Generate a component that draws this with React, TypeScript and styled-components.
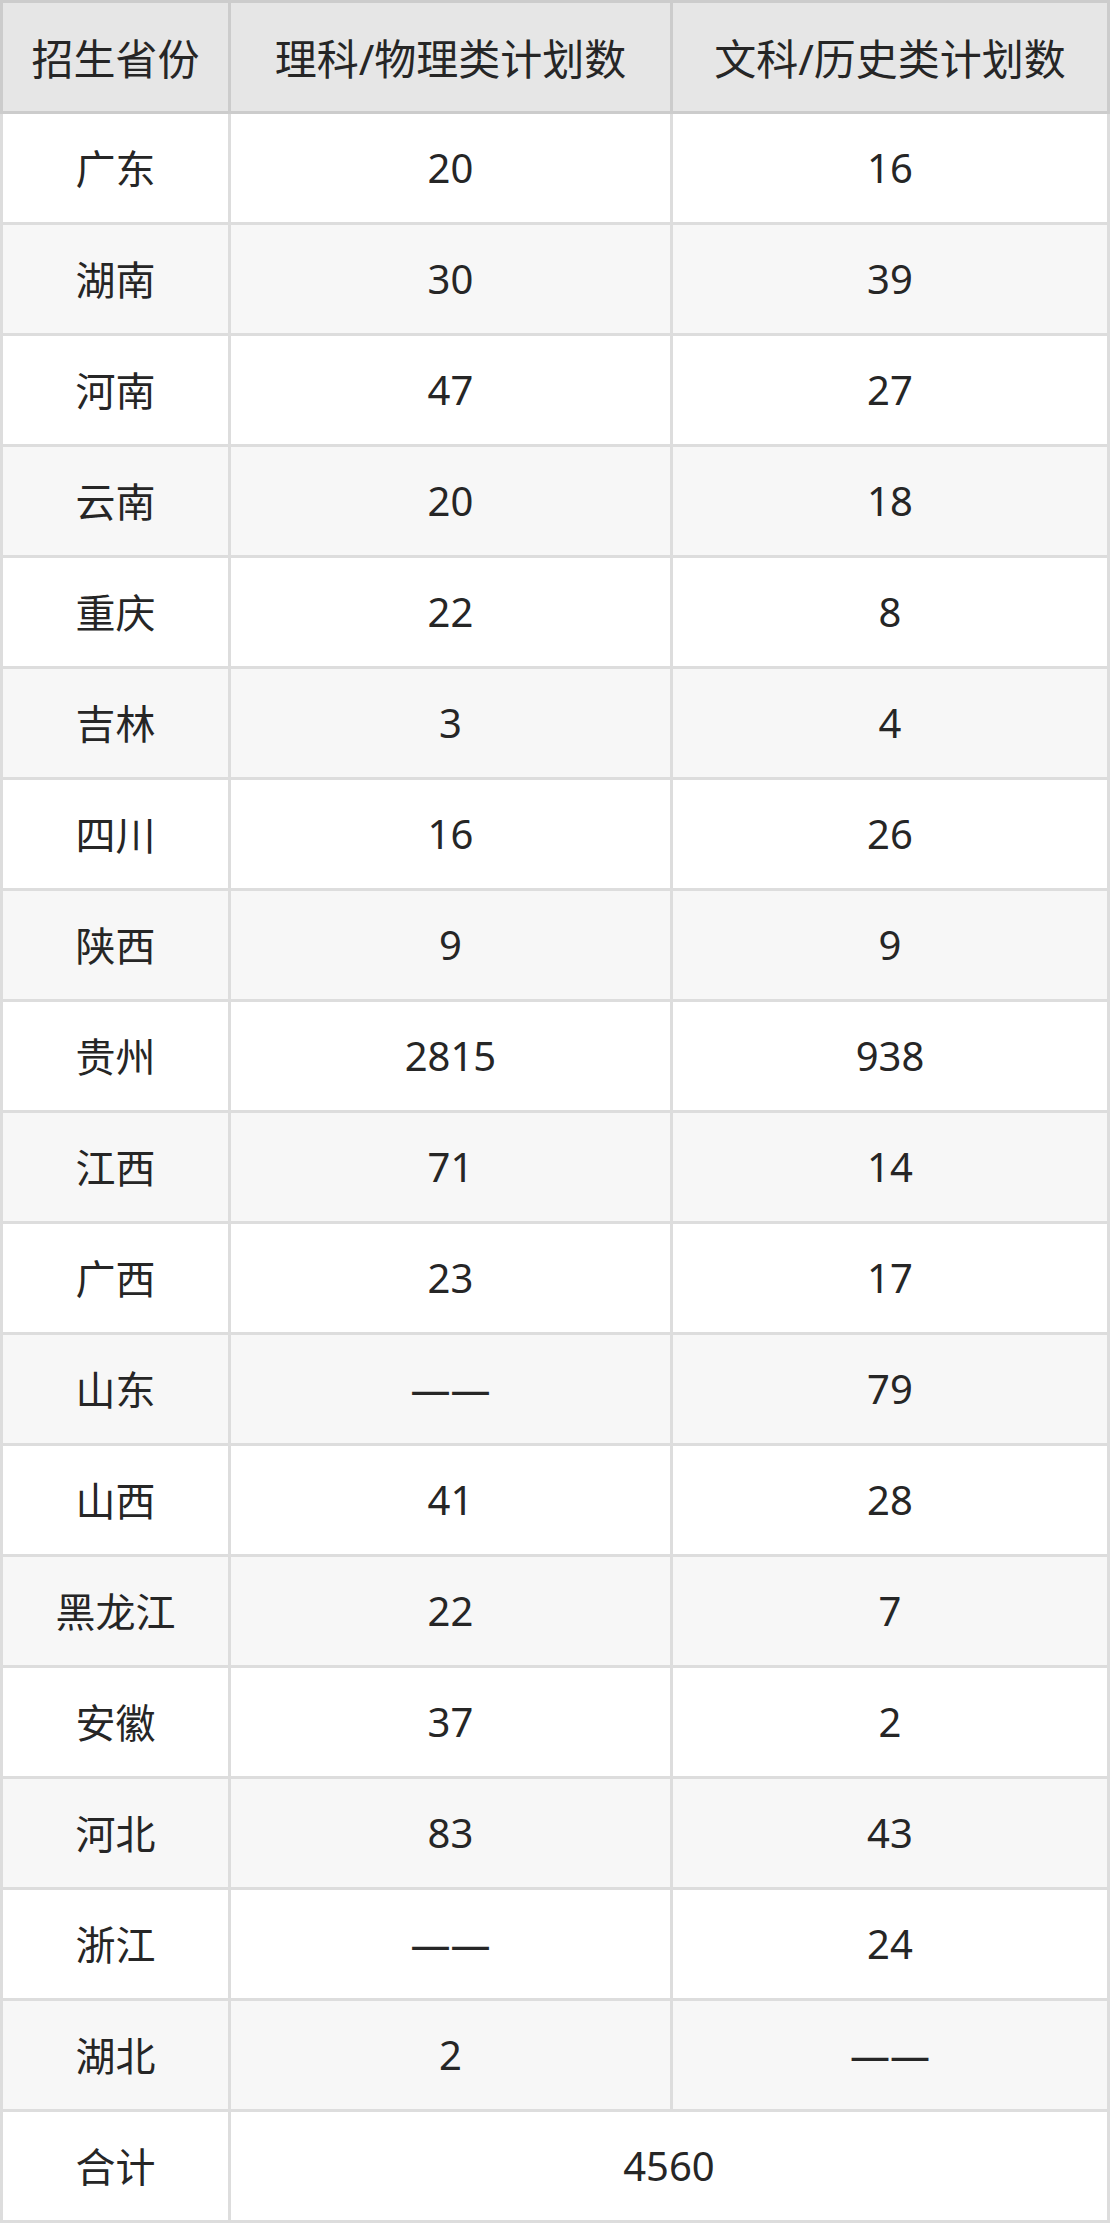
import { Fragment } from "react";
import styled, { createGlobalStyle } from "styled-components";

const GlobalStyle = createGlobalStyle`
  html, body {
    margin: 0;
    padding: 0;
    background: #ffffff;
  }
  * {
    box-sizing: border-box;
  }
`

const Table = styled.div`
  display: grid;
  grid-template-columns: 231px 442px 437px;
  width: 1110px;
  font-family: "Noto Sans", "Noto Sans CJK SC", sans-serif;
  font-size: 40px;
  color: #262626;
`

interface CellProps {
  first?: boolean
  striped?: boolean
  span?: number
}

const Cell = styled.div<CellProps>`
  display: flex;
  align-items: center;
  justify-content: center;
  height: 111px;
  padding-bottom: 2px;
  border-right: 3px solid #dddddd;
  border-bottom: 3px solid #dddddd;
  border-left: ${({first}) => first ? "3px solid #dddddd" : "none"};
  background-color: ${({striped}) => striped ? "#f7f7f7" : "#ffffff"};
  grid-column: ${({span}) => span ? `span ${span}` : "auto"};
`

const HeadCell = styled(Cell)`
  height: 114px;
  font-size: 42px;
  border-top: 3px solid #cccccc;
  border-right-color: #cccccc;
  border-bottom-color: #cccccc;
  border-left-color: #cccccc;
  background-color: #e6e6e6;
`

const rows: [string, string, string][] = [
  ["广东", "20", "16"],
  ["湖南", "30", "39"],
  ["河南", "47", "27"],
  ["云南", "20", "18"],
  ["重庆", "22", "8"],
  ["吉林", "3", "4"],
  ["四川", "16", "26"],
  ["陕西", "9", "9"],
  ["贵州", "2815", "938"],
  ["江西", "71", "14"],
  ["广西", "23", "17"],
  ["山东", "——", "79"],
  ["山西", "41", "28"],
  ["黑龙江", "22", "7"],
  ["安徽", "37", "2"],
  ["河北", "83", "43"],
  ["浙江", "——", "24"],
  ["湖北", "2", "——"],
]

export default function App() {
  return (
    <>
      <GlobalStyle />
      <Table>
        <HeadCell first>招生省份</HeadCell>
        <HeadCell>理科/物理类计划数</HeadCell>
        <HeadCell>文科/历史类计划数</HeadCell>
        {rows.map(([province, science, arts], i) => (
          <Fragment key={province}>
            <Cell first striped={i % 2 === 1}>{province}</Cell>
            <Cell striped={i % 2 === 1}>{science}</Cell>
            <Cell striped={i % 2 === 1}>{arts}</Cell>
          </Fragment>
        ))}
        <Cell first>合计</Cell>
        <Cell span={2}>4560</Cell>
      </Table>
    </>
  )
}
